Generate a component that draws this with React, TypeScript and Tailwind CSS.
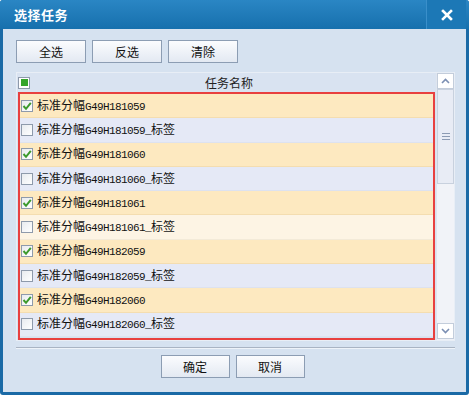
import React from "react";

const rows = [
  { name: "G49H181059", tag: false, checked: true },
  { name: "G49H181059", tag: true, checked: false },
  { name: "G49H181060", tag: false, checked: true },
  { name: "G49H181060", tag: true, checked: false },
  { name: "G49H181061", tag: false, checked: true },
  { name: "G49H181061", tag: true, checked: false, hover: true },
  { name: "G49H182059", tag: false, checked: true },
  { name: "G49H182059", tag: true, checked: false },
  { name: "G49H182060", tag: false, checked: true },
  { name: "G49H182060", tag: true, checked: false },
];

const cjk = { fontFamily: '"Noto Sans CJK SC", "Noto Sans", sans-serif' };
const mono = { fontFamily: '"Liberation Mono", "DejaVu Sans Mono", monospace' };

function Check({ checked }: { checked: boolean }) {
  return (
    <div className="w-[12px] h-[12px] border border-[#8e9aab] bg-gradient-to-br from-[#e8ebef] to-white flex items-center justify-center shrink-0">
      {checked && (
        <svg width="10" height="10" viewBox="0 0 10 10">
          <path d="M1.5 5 L4 7.8 L8.8 1.8" stroke="#3c9a2c" strokeWidth="2" fill="none" />
        </svg>
      )}
    </div>
  );
}

function Btn({ label, w = "w-[70px]" }: { label: string; w?: string }) {
  return (
    <div
      className={`${w} h-[23px] border border-[#8c9db3] bg-gradient-to-b from-[#fbfcfe] to-[#e3e9f2] flex items-center justify-center text-[12px] text-[#111]`}
      style={cjk}
    >
      {label}
    </div>
  );
}

export default function App() {
  return (
    <div className="w-[470px] h-[396px] bg-white">
      <div className="w-[469px] h-[395px] rounded-[3px] bg-[#1a6aa6] flex flex-col px-[3px] pb-[3px]">
        <div className="h-[29px] -mx-[3px] rounded-t-[3px] bg-gradient-to-b from-[#2a86c4] to-[#1670ad] flex items-center">
          <div className="pl-[14px] flex-1 text-white font-bold text-[13px] tracking-[0.5px]" style={cjk}>
            选择任务
          </div>
          <div className="w-[40px] h-[29px] border-l border-[#3a8fca] bg-[#1c78b6] flex items-center justify-center mr-[3px]">
            <svg width="12" height="12" viewBox="0 0 12 12">
              <path d="M2 2 L10 10 M10 2 L2 10" stroke="white" strokeWidth="2.6" strokeLinecap="square" />
            </svg>
          </div>
        </div>
        <div className="flex-1 bg-[#d6e2f0] flex flex-col pl-[13px] pr-[11px]">
          <div className="flex gap-[6px] pt-[11px]">
            <Btn label="全选" />
            <Btn label="反选" />
            <Btn label="清除" />
          </div>
          <div className="mt-[9px] h-[269px] border border-[#e8eef6] flex">
            <div className="flex-1 flex flex-col">
              <div className="h-[19px] flex items-center pl-[1px] bg-[#d9e3f1]">
                <div className="w-[12px] h-[12px] border border-[#8e9aab] bg-white flex items-center justify-center">
                  <div className="w-[7px] h-[7px] bg-[#35a52b]" />
                </div>
                <div className="flex-1 text-center text-[12px] text-[#222] pr-[8px]" style={cjk}>
                  任务名称
                </div>
              </div>
              <div className="ml-[1px] mr-[1px] border-2 border-[#e8403f] flex-1 flex flex-col overflow-hidden">
                {rows.map((r, i) => (
                  <div
                    key={i}
                    className={`h-[24.3px] shrink-0 flex items-center pl-[1px] border-b ${
                      r.hover
                        ? "bg-[#fdf4e4] border-[#f3ead8]"
                        : r.tag
                        ? "bg-[#e5e9f6] border-[#dde2ef]"
                        : "bg-[#fde9c0] border-[#f4ddb0]"
                    }`}
                  >
                    <Check checked={r.checked} />
                    <div className="ml-[4px] flex items-baseline text-[#111] whitespace-nowrap leading-[16px]">
                      <span className="text-[12px]" style={cjk}>标准分幅</span>
                      <span className="text-[11px] tracking-[-0.6px]" style={mono}>{r.name}</span>
                      {r.tag && (
                        <>
                          <span className="text-[11px] tracking-[-0.6px]" style={mono}>_</span>
                          <span className="text-[12px]" style={cjk}>标签</span>
                        </>
                      )}
                    </div>
                  </div>
                ))}
              </div>
            </div>
            <div className="w-[18px] flex flex-col bg-[#eef1f7] border-l border-[#dfe5ef]">
              <div className="h-[16px] border border-[#c3cddb] bg-white flex items-center justify-center">
                <svg width="9" height="6" viewBox="0 0 9 6">
                  <path d="M1 5 L4.5 1.5 L8 5" stroke="#7b8fb3" strokeWidth="1.6" fill="none" />
                </svg>
              </div>
              <div className="h-[95px] border border-[#c8d1de] bg-[#e8ecf5] flex flex-col items-center justify-center gap-[2px]">
                <div className="w-[8px] h-[1px] bg-[#8c9bb3]" />
                <div className="w-[8px] h-[1px] bg-[#8c9bb3]" />
                <div className="w-[8px] h-[1px] bg-[#8c9bb3]" />
              </div>
              <div className="flex-1 bg-[#f1f3f8]" />
              <div className="h-[16px] border border-[#c3cddb] bg-white flex items-center justify-center mb-[1px]">
                <svg width="9" height="6" viewBox="0 0 9 6">
                  <path d="M1 1 L4.5 4.5 L8 1" stroke="#7b8fb3" strokeWidth="1.6" fill="none" />
                </svg>
              </div>
            </div>
          </div>
          <div className="mt-[6px] h-[2px] border-t border-[#a9b4c3] border-b border-b-[#eef3f9]" />
          <div className="flex justify-center gap-[6px] pt-[6px] pr-[6px]">
            <Btn label="确定" w="w-[69px]" />
            <Btn label="取消" w="w-[69px]" />
          </div>
        </div>
      </div>
    </div>
  );
}
